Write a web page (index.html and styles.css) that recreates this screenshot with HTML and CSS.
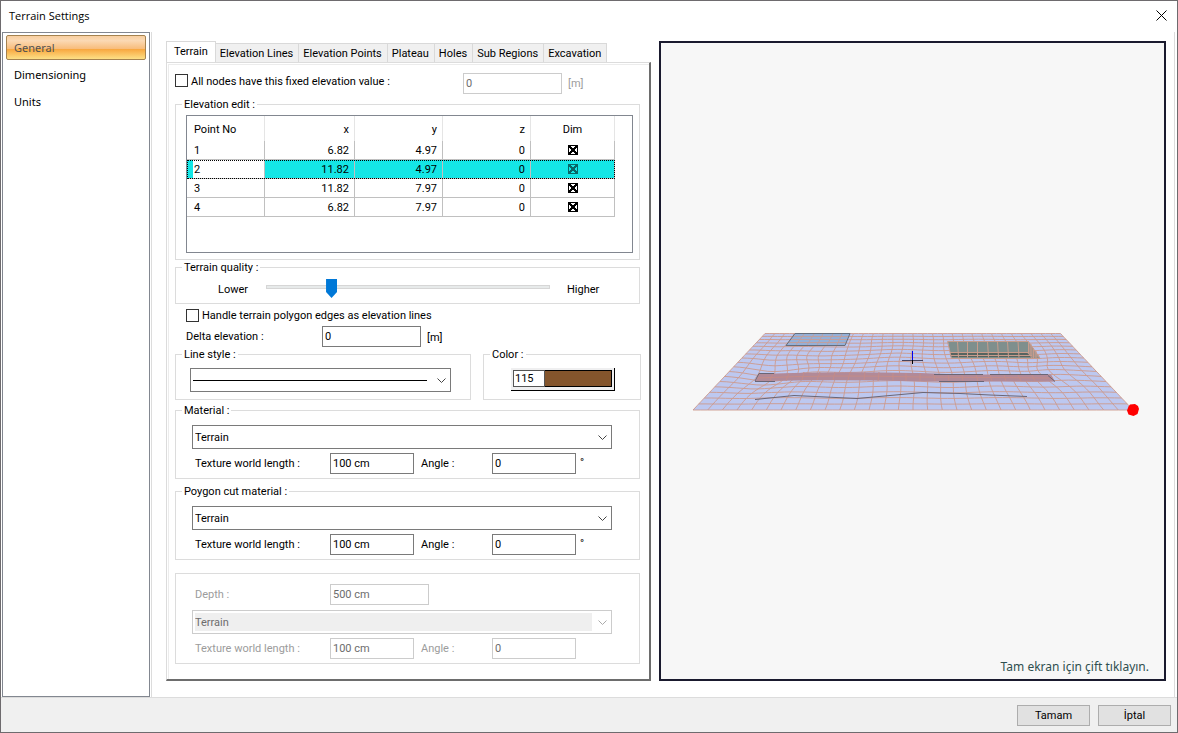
FILE: index.html
```
<!doctype html>
<html lang="en">
<head>
    <meta charset="utf-8">
    <title>Terrain Settings</title>
    <link rel="stylesheet" href="styles.css">
</head>
<body>
    <header class="titlebar">
        <h1>Terrain Settings</h1>
        <button class="close-btn" type="button" aria-label="Close">
            <svg width="11" height="11" viewBox="0 0 11 11"><path d="M0.5 0.5l10 10M10.5 0.5l-10 10" stroke="#000" fill="none"/></svg>
        </button>
    </header>
    <main>
        <nav class="pages">
            <a class="active" href="#general">General</a>
            <a href="#dimensioning">Dimensioning</a>
            <a href="#units">Units</a>
        </nav>
        <div class="content">
            <form class="settings" id="settings">
                <div class="tabs" role="tablist">
                    <button type="button" role="tab" class="active" aria-selected="true">Terrain</button>
                    <button type="button" role="tab">Elevation Lines</button>
                    <button type="button" role="tab">Elevation Points</button>
                    <button type="button" role="tab">Plateau</button>
                    <button type="button" role="tab">Holes</button>
                    <button type="button" role="tab">Sub Regions</button>
                    <button type="button" role="tab">Excavation</button>
                </div>
                <div class="panel">
                    <div class="fixed-row">
                        <input type="checkbox" id="fixed">
                        <label for="fixed">All nodes have this fixed elevation value :</label>
                        <input type="text" class="medium" value="0" aria-label="Fixed elevation" disabled>
                        <span class="unit off">[m]</span>
                    </div>

                    <fieldset>
                        <legend>Elevation edit :</legend>
                        <div class="points">
                            <table>
                                <thead>
                                    <tr><th>Point No</th><th>x</th><th>y</th><th>z</th><th>Dim</th></tr>
                                </thead>
                                <tbody>
                                    <tr><td>1</td><td>6.82</td><td>4.97</td><td>0</td><td><input type="checkbox" class="dim" aria-label="Dim 1" checked></td></tr>
                                    <tr class="selected"><td>2</td><td>11.82</td><td>4.97</td><td>0</td><td><input type="checkbox" class="dim" aria-label="Dim 2" checked></td></tr>
                                    <tr><td>3</td><td>11.82</td><td>7.97</td><td>0</td><td><input type="checkbox" class="dim" aria-label="Dim 3" checked></td></tr>
                                    <tr><td>4</td><td>6.82</td><td>7.97</td><td>0</td><td><input type="checkbox" class="dim" aria-label="Dim 4" checked></td></tr>
                                </tbody>
                            </table>
                        </div>
                    </fieldset>

                    <fieldset>
                        <legend>Terrain quality :</legend>
                        <div class="quality">
                            <label for="quality">Lower</label>
                            <input type="range" id="quality" min="0" max="100" value="22">
                            <span>Higher</span>
                        </div>
                    </fieldset>

                    <div class="edges-row">
                        <input type="checkbox" id="edges">
                        <label for="edges">Handle terrain polygon edges as elevation lines</label>
                    </div>
                    <div class="delta-row">
                        <label for="delta">Delta elevation :</label>
                        <input type="text" id="delta" class="medium" value="0">
                        <span class="unit">[m]</span>
                    </div>

                    <div class="pair">
                        <fieldset>
                            <legend>Line style :</legend>
                            <div class="line-style">
                                <span class="drop">
                                    <select class="line" aria-label="Line style"><option></option></select>
                                    <svg width="9" height="5" viewBox="0 0 9 5"><path d="M0.5 0.5l4 4 4-4"/></svg>
                                </span>
                            </div>
                        </fieldset>
                        <fieldset>
                            <legend>Color :</legend>
                            <button type="button" class="color"><span>115</span><i></i></button>
                        </fieldset>
                    </div>

                    <fieldset class="material">
                        <legend>Material :</legend>
                        <div class="material-body">
                            <span class="drop">
                                <select aria-label="Material"><option>Terrain</option></select>
                                <svg width="9" height="5" viewBox="0 0 9 5"><path d="M0.5 0.5l4 4 4-4"/></svg>
                            </span>
                            <div class="texture">
                                <label for="len1">Texture world length :</label>
                                <input type="text" id="len1" value="100 cm">
                                <label for="ang1">Angle :</label>
                                <input type="text" id="ang1" value="0">
                                <span>°</span>
                            </div>
                        </div>
                    </fieldset>

                    <fieldset class="material cut">
                        <legend>Poygon cut material :</legend>
                        <div class="material-body">
                            <span class="drop">
                                <select aria-label="Polygon cut material"><option>Terrain</option></select>
                                <svg width="9" height="5" viewBox="0 0 9 5"><path d="M0.5 0.5l4 4 4-4"/></svg>
                            </span>
                            <div class="texture">
                                <label for="len2">Texture world length :</label>
                                <input type="text" id="len2" value="100 cm">
                                <label for="ang2">Angle :</label>
                                <input type="text" id="ang2" value="0">
                                <span>°</span>
                            </div>
                        </div>
                    </fieldset>

                    <fieldset class="depth off" disabled>
                        <div class="material-body">
                            <div class="texture">
                                <label for="depth">Depth :</label>
                                <input type="text" id="depth" class="medium" value="500 cm">
                            </div>
                            <span class="drop">
                                <select aria-label="Depth material"><option>Terrain</option></select>
                                <svg width="9" height="5" viewBox="0 0 9 5"><path d="M0.5 0.5l4 4 4-4"/></svg>
                            </span>
                            <div class="texture">
                                <label for="len3">Texture world length :</label>
                                <input type="text" id="len3" value="100 cm">
                                <label for="ang3">Angle :</label>
                                <input type="text" id="ang3" value="0">
                            </div>
                        </div>
                    </fieldset>
                </div>
            </form>

            <section class="preview">
                <svg viewBox="661 43 503 636">
                    <path class="ground" d="M765 333.5H1060.500L1133 410H693z"/>
                    <path class="mesh"/>
                    <path class="plateau" d="M795 333.500H850L845 345.500H786z"/>
                    <path class="plateau-mesh" d="M793 336.500H849M791 339.500H848M788 342.500H846M804 334l-8 11M814 334l-7 11M823 334l-6 11M833 334l-6 11M842 334l-5 11"/>
                    <path class="plateau-edge" d="M795 333.500H850L845 345.500H786z"/>
                    <path class="road" d="M759 374Q830 371 920 373L960 374.500H1051L1055 381.500H925Q830 379 755 381.500z"/>
                    <path class="road-mesh" d="M757 378Q830 374.500 920 377L1053 378M773 373l-3 8M789 373l-3 8M804 372l-2 8M820 372l-3 8M835 372l-2 8M850 372l-2 8M865 372l-1 8M879 372l-1 9M893 373v8M906 373v8M920 373v8M934 374l1 7M948 374l1 7M962 375l1 6M976 375l2 6M990 375l2 6M1004 375l2 6M1018 375l3 6M1032 375l3 6"/>
                    <path class="dark" d="M755 381l4-7.500h15M755 381.500h20M934 374.500h49M1048 375.500l7 6M939 381.500h45M990 374.500h58"/>
                    <path class="dark" d="M755 399.500L794 395.500L857 398.500L923 392.500L960 393.500L990 395L1027 396.500"/>
                    <path class="pit" d="M948 341.500H1028L1040 358H951z"/>
                    <path class="pit-floor" d="M950 353H1027L1033 357H951z"/>
                    <path class="pit-side" d="M1028 341.500L1040 357.500H1032L1028 353z"/>
                    <path class="pit-mesh" d="M947.500 341.500H1028.500L1040 358.500H951.500zM950 352.500H1029M951 355.500H1032M957.500 341.500l1 16M967.500 341.500v16M977.500 341.500v16M987.500 341.500l1 16M997.500 341.500l1 16M1007.500 341.500l1 16M1018 341.500l1 16M1028.500 341.500v12l4 5M1031 344v12M1033.500 348v10M1036 351v7"/>
                    <path d="M902 360.500h21" stroke="#444460"/>
                    <path d="M912.500 351v9" stroke="#0000f0"/>
                    <path d="M912.500 360v4" stroke="#000"/>
                    <path d="M1130 404.500l5-0.500 3 2 1 3-1.500 5-4 2-5-1.500-1.500-4 1.500-4z" fill="#f00"/>
                </svg>
                <p>Tam ekran için çift tıklayın.</p>
            </section>
        </div>
    </main>
    <footer>
        <button type="submit" form="settings">Tamam</button>
        <button type="button">İptal</button>
    </footer>
<script src="mesh.js"></script>
</body>
</html>
```
FILE: mesh.js
```
// terrain mesh: rows and columns projected on the ground trapezoid
const ROWS = 17;
const COLS = 30;

function bump(u, v, cu, cv, size) {
    const d = ((u - cu) ** 2 + (v - cv) ** 2 * 0.3) / (size * size);
    return Math.exp(-d);
}

function project(u, v) {
    // nodes are pulled around the ends of the road
    const edge = Math.min(1, 12 * u * (1 - u)) * Math.sin(Math.PI * v);
    const left = bump(u, v, 0.1, 0.6, 0.1);
    const right = bump(u, v, 0.9, 0.62, 0.08);
    const mid = bump(u, v, 0.22, 0.35, 0.08);
    const du = edge * (0.006 * Math.sin(v * 9 + u * 14) + 0.03 * left - 0.025 * right - 0.016 * mid);
    const dv = edge * (0.012 * Math.sin(u * 24) + 0.06 * left + 0.04 * mid - 0.03 * right);
    const s = v + dv;
    const t = s * (0.62 + 0.38 * s);
    const x0 = 765 - 72 * t;
    const x1 = 1060.5 + 72.5 * t;
    return (x0 + (x1 - x0) * (u + du)).toFixed(1) + ' ' + (333.5 + 76.5 * t).toFixed(1);
}

let d = '';
for (let r = 0; r <= ROWS; r++) {
    for (let i = 0; i <= 60; i++) {
        d += (i ? 'L' : 'M') + project(i / 60, r / ROWS);
    }
}
for (let c = 0; c <= COLS; c++) {
    for (let i = 0; i <= 24; i++) {
        d += (i ? 'L' : 'M') + project(c / COLS, i / 24);
    }
}
document.querySelector('.mesh').setAttribute('d', d);
```
FILE: styles.css
```
* {
    box-sizing: border-box;
}
body {
    display: flex;
    flex-direction: column;
    min-height: 100vh;
    margin: 0;
    border: 1px solid #6e6b6e;
    background: white;
    color: black;
    font: 11px/14px Roboto, "Liberation Sans", Arial, sans-serif;
}
button, input, select {
    font: inherit;
    color: inherit;
    border-radius: 0;
}
.titlebar {
    display: flex;
    justify-content: space-between;
    align-items: center;
    height: 31px;
    padding: 0 8px 2px;
}
h1 {
    margin: 0;
    font: 11px/16px "Open Sans", sans-serif;
}
.close-btn {
    display: flex;
    padding: 2px;
    border: 0;
    background: none;
}
main {
    display: flex;
    flex: 1;
    padding: 0 2px 0 1px;
}
.pages {
    display: flex;
    flex-direction: column;
    gap: 2px;
    width: 148px;
    padding: 2px 3px;
    border: 1px solid #828790;
    font: 11px/22px "Noto Sans", sans-serif;
}
.pages a {
    padding: 1px 7px 0;
    border: 1px solid transparent;
    border-radius: 2px;
    color: black;
    text-decoration: none;
}
.pages .active {
    border-color: #a5824f;
    background: linear-gradient(#f8cfa0, #fbd9b4 20%, #f8bd7c 55%, #f8a53d 56%, #fde086);
    color: #505050;
}
.content {
    display: flex;
    flex: 1;
    gap: 8px;
    margin-left: 1px;
    padding: 9px 8px 16px 14px;
    border: solid #dcdcdc;
    border-width: 0 1px;
}

/* tabs */
.settings {
    display: flex;
    flex-direction: column;
    width: 485px;
}
.tabs {
    display: flex;
    align-items: flex-end;
    height: 21px;
}
.tabs button {
    height: 19px;
    padding: 1px 5px 0 4px;
    border: 1px solid #d9d9d9;
    border-width: 1px 1px 0 0;
    background: #f0f0f0;
    white-space: nowrap;
}
.tabs .active {
    height: 21px;
    padding: 0 7px;
    border-left-width: 1px;
    background: white;
}
.panel {
    flex: 1;
    padding: 10px 9px 12px 8px;
    border: 1px solid #dcdcdc;
    border-right: 2px solid #6d6d6d;
    border-bottom: 2px solid #6d6d6d;
    box-shadow: inset 1px 1px white, inset 2px 2px #ececec;
}

/* form controls */
input[type=text] {
    width: 84px;
    height: 21px;
    padding: 0 2px 1px;
    border: 1px solid #7a7a7a;
    background: white;
}
input[type=text].medium {
    width: 99px;
}
input[type=text]:disabled {
    border-color: #ccc;
    color: #6d6d6d;
}
input[type=checkbox] {
    appearance: none;
    width: 13px;
    height: 13px;
    margin: 0 3px 0 0;
    border: 1px solid #333;
    background: white;
}
.off {
    color: #9c9c9c;
}
.drop {
    position: relative;
    display: block;
}
.drop svg {
    position: absolute;
    right: 5px;
    top: 10px;
    fill: none;
    stroke: #444;
    pointer-events: none;
}
select {
    appearance: none;
    display: block;
    width: 100%;
    height: 24px;
    padding: 1px 2px 0;
    border: 1px solid #7a7a7a;
    background: white;
}
select.line {
    background: linear-gradient(black, black) 2px 11px / 234px 1px no-repeat white;
}
select:disabled {
    border-color: #ccc;
    background: linear-gradient(#efefef, #efefef) 2px 2px / 397px 18px no-repeat white;
    color: #6d6d6d;
    opacity: 1;
}
.off .drop svg {
    stroke: #aaa;
}

fieldset {
    min-width: 0;
    margin: 0;
    padding: 0 6px;
    border: 1px solid #dcdcdc;
}
legend {
    height: 14px;
    padding: 1px 2px 0;
}

.fixed-row {
    display: grid;
    grid-template-columns: 16px 272px 99px 1fr;
    height: 24px;
}
.fixed-row input[type=checkbox] {
    margin-top: 1px;
}
.fixed-row label {
    margin-top: 2px;
}
.unit {
    padding: 4px 6px 2px;
}

/* elevation table */
.points {
    height: 138px;
    margin: 4px 0 6px 4px;
    border: 1px solid #828790;
}
table {
    width: 428px;
    table-layout: fixed;
    border-collapse: separate;
    border-spacing: 0;
}
th, td {
    height: 19px;
    padding: 2px 5px 0;
    border: 0 solid #c0c0c0;
    border-right-width: 1px;
    font-weight: normal;
    text-align: right;
}
td {
    border-bottom-width: 1px;
}
th {
    height: 25px;
    border-color: #e5e5e5;
}
th:first-child, td:first-child {
    width: 78px;
    padding-left: 7px;
    text-align: left;
}
th:nth-child(2) {
    width: 90px;
}
th:nth-child(3), th:nth-child(4) {
    width: 88px;
}
th:last-child, td:last-child {
    text-align: center;
}
td:last-child {
    padding-top: 0;
}
.selected {
    outline: 1px dotted black;
    outline-offset: -1px;
    background: #14e6e6;
}
.selected td:first-child {
    background: linear-gradient(90deg, #14e6e6 6px, white 6px);
}
input.dim {
    display: block;
    width: 10px;
    height: 10px;
    margin: 0 auto;
    border: 1px solid black;
    background:
        linear-gradient(45deg, transparent 41%, black 41%, black 59%, transparent 59%),
        linear-gradient(-45deg, transparent 41%, black 41%, black 59%, transparent 59%);
}
.selected .dim {
    opacity: 0.55;
}

.quality {
    display: flex;
    align-items: center;
    height: 29px;
    padding-left: 36px;
}
.quality label {
    width: 48px;
    padding-top: 2px;
}
.quality span {
    margin-left: 17px;
    padding-top: 2px;
}
input[type=range] {
    appearance: none;
    width: 284px;
    height: 21px;
    margin: 0;
    background:
        linear-gradient(#e7eaea, #e7eaea) 1px 8px / 282px 2px no-repeat,
        linear-gradient(#d6d6d6, #d6d6d6) 0 7px / 100% 4px no-repeat;
}
input[type=range]::-webkit-slider-thumb {
    appearance: none;
    width: 11px;
    height: 19px;
    background: #0078d7;
    clip-path: polygon(0 0, 100% 0, 100% 13px, 50% 100%, 0 13px);
}

.edges-row, .delta-row {
    display: flex;
    align-items: center;
    height: 21px;
    padding-left: 11px;
}
.edges-row {
    height: 22px;
}
.edges-row label {
    padding-top: 2px;
}
.delta-row label {
    width: 136px;
}

.pair {
    display: grid;
    grid-template-columns: 296px 158px;
    gap: 12px;
    margin-bottom: 3px;
}
.line-style {
    width: 261px;
    margin: 7px 8px;
}
.color {
    display: flex;
    width: 104px;
    height: 23px;
    margin: 7px 0 8px 21px;
    padding: 2px;
    border: solid black;
    border-width: 0 1px 1px 0;
    background: #efeff0;
    line-height: 15px;
    text-align: left;
}
.color span {
    width: 32px;
    padding-left: 1px;
    border: 1px solid #555;
    background: white;
}
.color i {
    flex: 1;
    border: 1px solid black;
    border-left: 0;
    background: #84552c;
}
.color span, .color i {
    height: 17px;
}

/* material groups */
.material-body {
    width: 430px;
    padding: 8px 0 4px 10px;
}
.texture {
    display: grid;
    grid-template-columns: 138px 84px 78px 84px 1fr;
    margin-top: 4px;
}
.texture label {
    padding: 4px 0 0 3px;
}
.texture label + input + label {
    padding-left: 7px;
}
.texture span {
    padding: 3px 0 0 4px;
}
.cut {
    margin-top: 5px;
}
.depth {
    margin-top: 13px;
}
.depth .material-body {
    padding-top: 6px;
}
.depth .drop {
    margin-top: 5px;
}

/* 3d view */
.preview {
    position: relative;
    flex: 1;
    border: 2px solid #1a1a2e;
    background: #f7f7f7;
}
.preview svg {
    position: absolute;
    width: 100%;
    height: 100%;
    fill: none;
}
.preview p {
    position: absolute;
    right: 15px;
    bottom: 4px;
    margin: 0;
    color: #2f4f4f;
    font: 12px/16px "Noto Sans", sans-serif;
}
.preview .ground {
    fill: #bdc8f0;
}
.plateau {
    fill: #94b0d8;
}
.plateau-edge {
    stroke: #666e7c;
}
.mesh {
    stroke: #cd9a8c;
    stroke-width: 0.9px;
}
.plateau-mesh {
    stroke: #bf9f9f;
}
.road {
    fill: #b28a98;
}
.road-mesh {
    stroke: #c48c88;
}
.dark {
    stroke: #6a6676;
}
.pit {
    fill: #7f8f8d;
}
.pit-floor {
    fill: #566460;
}
.pit-side {
    fill: #a3948c;
}
.pit-mesh {
    stroke: #c89c8c;
}

footer {
    display: flex;
    justify-content: flex-end;
    gap: 8px;
    padding: 7px 6px 6px;
    border-top: 1px solid #dcdcdc;
    background: #f0f0f0;
}
footer button {
    width: 73px;
    height: 21px;
    padding: 0;
    border: 1px solid #adadad;
    background: #e1e1e1;
}
```
